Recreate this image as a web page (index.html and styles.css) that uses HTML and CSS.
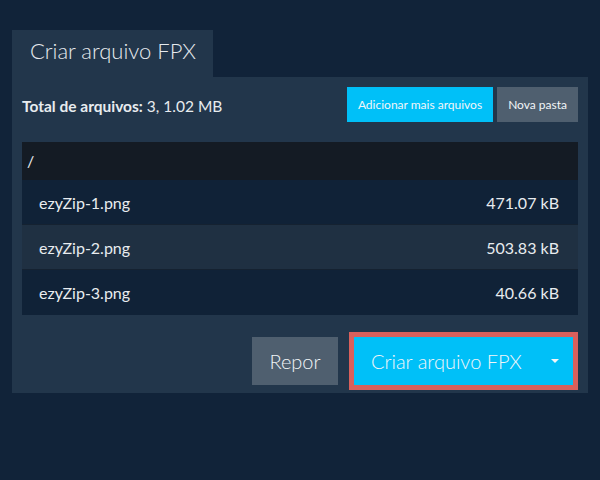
FILE: index.html
```html
<!DOCTYPE html>
<html lang="pt">
<head>
<meta charset="utf-8">
<title>Criar arquivo FPX</title>
<link rel="stylesheet" href="styles.css">
</head>
<body>
<div class="wrap">
  <div class="tab">Criar arquivo FPX</div>
  <div class="panel">
    <div class="topbar">
      <div class="total"><b>Total de arquivos:</b> 3, 1.02 MB</div>
      <div class="actions">
        <button class="btn btn-blue small">Adicionar mais arquivos</button>
        <button class="btn btn-grey small">Nova pasta</button>
      </div>
    </div>
    <div class="table">
      <div class="thead">/</div>
      <div class="row dark"><span>ezyZip-1.png</span><span>471.07 kB</span></div>
      <div class="row light"><span>ezyZip-2.png</span><span>503.83 kB</span></div>
      <div class="row dark"><span>ezyZip-3.png</span><span>40.66 kB</span></div>
    </div>
    <div class="bottom">
      <button class="btn btn-grey big reset">Repor</button>
      <div class="outline">
        <button class="btn btn-blue big create"><span>Criar arquivo FPX</span><span class="caret"></span></button>
      </div>
    </div>
  </div>
</div>
</body>
</html>
```
FILE: styles.css
```css
* { box-sizing: border-box; }
html, body { margin: 0; }
body {
  background: #112339;
  font-family: Lato, "Open Sans", sans-serif;
  color: #e8ecef;
  width: 600px;
  height: 480px;
}
.wrap { padding: 30px 12px 0 12px; }
.tab {
  width: 201px;
  height: 47px;
  background: #22364b;
  font-size: 22px;
  padding: 7px 0 0 18px;
  color: #e6eaee;
  font-weight: 300;
}
.panel {
  background: #22364b;
  padding: 10px 10px 3px 10px;
}
.topbar {
  display: flex;
  justify-content: space-between;
  align-items: center;
  height: 35px;
}
.total { font-size: 15.5px; color: #e8ecef; padding-top: 3px; }
.total b { font-weight: 700; }
.actions { display: flex; gap: 4px; }
.btn {
  border: 0;
  font-family: Lato, "Open Sans", sans-serif;
  color: #f2f6f8;
  cursor: pointer;
}
.btn-blue { background: #00c0f8; }
.btn-grey { background: #4f5f6f; }
.small {
  height: 35px;
  font-size: 12px;
  padding: 0 11px;
}
.table { margin-top: 20px; }
.thead {
  background: #141b24;
  height: 38px;
  line-height: 38px;
  padding-left: 5px;
  font-size: 16px;
}
.row {
  display: flex;
  justify-content: space-between;
  align-items: center;
  height: 45px;
  padding: 0 19px 0 17px;
  font-size: 16px;
  border-bottom: 1px solid #152231;
}
.row:last-child { border-bottom: 0; }
.dark { background: #102237; }
.light { background: #1f3042; }
.bottom {
  display: flex;
  justify-content: flex-end;
  align-items: center;
  gap: 11px;
  margin-top: 17px;
}
.big {
  height: 48px;
  font-size: 20px;
  font-weight: 300;
}
.reset { width: 86px; }
.outline {
  border: 5px solid #d9605c;
}
.create {
  display: flex;
  align-items: center;
  justify-content: space-between;
  width: 219px;
  padding: 0 14px 0 17px;
}
.caret {
  width: 0;
  height: 0;
  border-left: 4px solid transparent;
  border-right: 4px solid transparent;
  border-top: 4px solid #f2f6f8;
}
```
